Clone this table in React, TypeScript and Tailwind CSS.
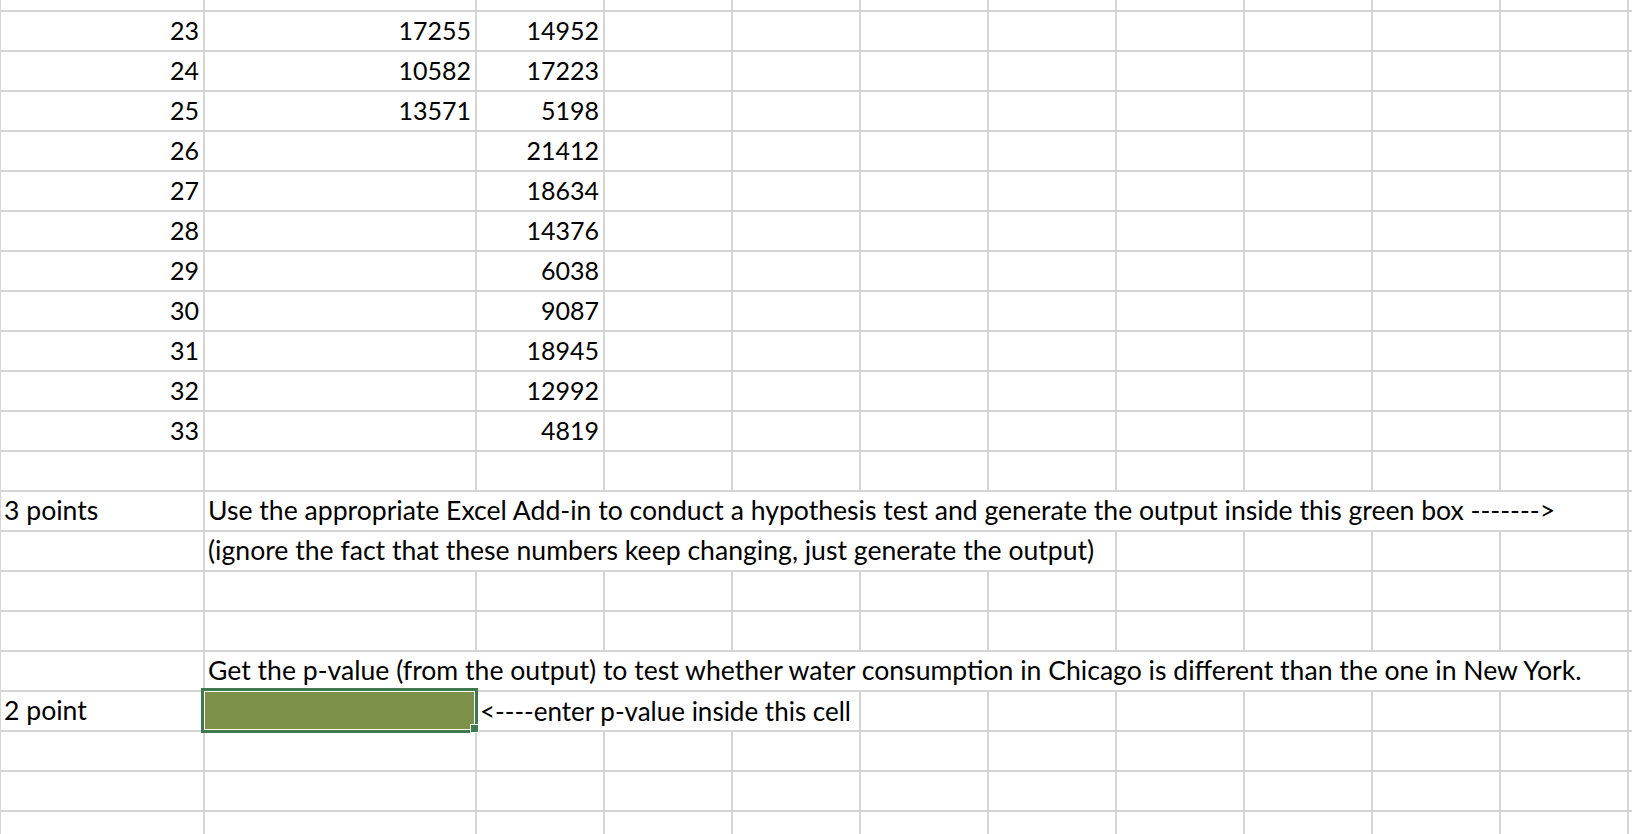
import React from "react";

type Cell = {
  text?: string;
  span?: number;
  right?: boolean;
  selected?: boolean;
  tight?: boolean;
};

const TOTAL_COLS = 12;

const spanClass: Record<number, string> = {
  1: "col-span-1",
  3: "col-span-3",
  6: "col-span-6",
  10: "col-span-10",
};

const num = (a: string, b?: string, c?: string): Cell[] => [
  { text: a, right: true },
  { text: b, right: true },
  { text: c, right: true },
];

const rows: Cell[][] = [
  num("22", "15565", "9243"),
  num("23", "17255", "14952"),
  num("24", "10582", "17223"),
  num("25", "13571", "5198"),
  num("26", "", "21412"),
  num("27", "", "18634"),
  num("28", "", "14376"),
  num("29", "", "6038"),
  num("30", "", "9087"),
  num("31", "", "18945"),
  num("32", "", "12992"),
  num("33", "", "4819"),
  [],
  [
    { text: "3 points" },
    {
      span: 10,
      text: "Use the appropriate Excel Add-in to conduct a hypothesis test and generate the output inside this green box ------->",
    },
  ],
  [{}, { span: 6, text: "(ignore the fact that these numbers keep changing, just generate the output)" }],
  [],
  [],
  [
    {},
    {
      span: 10,
      text: "Get the p-value (from the output) to test whether water consumption in Chicago is different than the one in New York.",
    },
  ],
  [
    { text: "2 point" },
    { selected: true },
    { span: 3, text: "<----enter p-value inside this cell", tight: true },
  ],
  [],
  [],
  [],
];

// pad each row out with empty cells so the grid stays aligned
const fillRow = (cells: Cell[]): Cell[] => {
  const used = cells.reduce((n, c) => n + (c.span ?? 1), 0);
  const rest: Cell[] = Array.from({ length: Math.max(0, TOTAL_COLS - used) }, () => ({}));
  return [...cells, ...rest];
};

const SheetCell = ({ cell }: { cell: Cell }) => {
  const span = spanClass[cell.span ?? 1];

  if (cell.selected) {
    return (
      <div className={`${span} relative bg-white`}>
        <div className="absolute -left-[4px] -right-[3px] -top-[4px] -bottom-[3px] z-10 border-[3px] border-[#3e7a4e]">
          <div className="h-full w-full border border-white bg-[#7c9049]" />
          <div className="absolute -bottom-[3px] -right-[4px] h-[9px] w-[9px] border border-white bg-[#3e7a4e]" />
        </div>
      </div>
    );
  }

  let look = "justify-start pb-[6px] pl-[3px] text-[26.6px]";
  if (cell.right) look = "justify-end pb-[7px] pr-[4px] text-[25px]";
  else if (cell.tight) look = "justify-start pb-[6px] pl-[3px] text-[26px]";

  return (
    <div className={`${span} flex items-end whitespace-nowrap bg-white leading-none ${look}`}>
      {cell.text}
    </div>
  );
};

export default function App() {
  return (
    <div className="h-screen w-full overflow-hidden bg-white font-['Lato',sans-serif] text-black">
      <div className="-mt-[28px] grid w-[1632px] auto-rows-[38px] grid-cols-[202px_270px_repeat(9,126px)_1fr] gap-[2px] bg-[#d4d4d4] pl-[1px]">
        {rows.map((cells, r) =>
          fillRow(cells).map((cell, c) => <SheetCell key={`${r}-${c}`} cell={cell} />)
        )}
      </div>
    </div>
  );
}
